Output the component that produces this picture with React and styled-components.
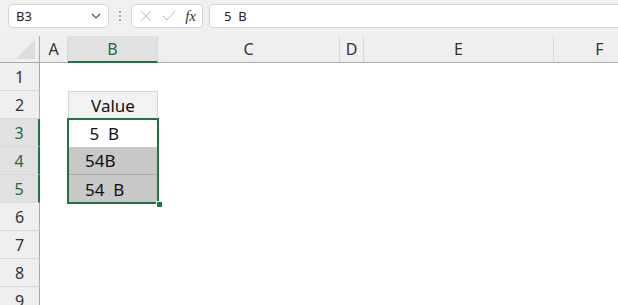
import React from "react";
import styled, { createGlobalStyle } from "styled-components";

const Global = createGlobalStyle`
  html, body { margin: 0; padding: 0; background: #ffffff; }
  body { font-family: "Segoe UI", "Noto Sans", "Open Sans", sans-serif; overflow: hidden; }
`;

const Page = styled.div`
  width: 618px;
  height: 305px;
  display: flex;
  flex-direction: column;
  background: #fff;
  overflow: hidden;
`;

const Toolbar = styled.div`
  height: 36px;
  flex: none;
  background: #f0f0f0;
  display: flex;
  align-items: flex-start;
  padding: 4px 0 0 8px;
  box-sizing: border-box;
`;

const Box = styled.div`
  height: 24px;
  box-sizing: border-box;
  background: #fff;
  border: 1px solid #d5d5d5;
  border-radius: 4px;
  display: flex;
  align-items: center;
`;

const NameBox = styled(Box)`
  width: 101px;
  padding: 0 6px 0 7px;
  justify-content: space-between;
  font-size: 13px;
  color: #222;
`;

const Dots = styled.div`
  width: 22px;
  height: 24px;
  display: flex;
  flex-direction: column;
  align-items: center;
  justify-content: center;
  gap: 2px;
  span {
    width: 2px;
    height: 2px;
    background: #8a8a8a;
    border-radius: 1px;
  }
`;

const FxBox = styled(Box)`
  width: 72px;
  padding: 0 4px 0 8px;
  justify-content: space-between;
`;

const FormulaInput = styled(Box)`
  flex: 1;
  margin-left: 6px;
  border-right: none;
  border-radius: 4px 0 0 4px;
  padding-left: 14px;
  font-size: 13px;
  color: #222;
  white-space: pre;
`;

const Fx = styled.span`
  font-family: "Liberation Serif", "DejaVu Serif", serif;
  font-style: italic;
  font-size: 15px;
  color: #333;
  padding-right: 2px;
`;

const Sheet = styled.div`
  display: grid;
  grid-template-columns: 40px 28px 90px 182px 24px 190px 92px;
  grid-template-rows: 27px repeat(9, 28px);
  position: relative;
`;

const Corner = styled.div`
  background: #efefef;
  border-bottom: 1px solid #ababab;
  border-right: 1px solid #ababab;
  position: relative;
  &::after {
    content: "";
    position: absolute;
    right: 4px;
    bottom: 3px;
    width: 0;
    height: 0;
    border-left: 19px solid transparent;
    border-bottom: 19px solid #dcdcdc;
  }
`;

const ColHead = styled.div`
  background: ${(p) => (p.$sel ? "#e1e1e1" : "#efefef")};
  color: ${(p) => (p.$sel ? "#1d6b3f" : "#333")};
  border-bottom: ${(p) => (p.$sel ? "2px solid #217346" : "1px solid #ababab")};
  border-right: 1px solid #d8d8d8;
  font-size: 16px;
  display: flex;
  align-items: center;
  justify-content: center;
  box-sizing: border-box;
  padding-top: ${(p) => (p.$sel ? "1px" : "0")};
`;

const RowHead = styled.div`
  background: ${(p) => (p.$sel ? "#e1e1e1" : "#efefef")};
  color: ${(p) => (p.$sel ? "#1d6b3f" : "#333")};
  border-right: ${(p) => (p.$sel ? "2px solid #217346" : "1px solid #ababab")};
  border-bottom: 1px solid #d8d8d8;
  font-size: 16px;
  display: flex;
  align-items: center;
  justify-content: center;
  box-sizing: border-box;
`;

const Cell = styled.div`
  background: ${(p) => p.$bg || "#fff"};
  border: ${(p) => (p.$boxed ? "1px solid #d4d4d4" : "none")};
  border-bottom: ${(p) => (p.$line ? "1px solid #ababab" : p.$boxed ? "1px solid #d4d4d4" : "none")};
  font-size: 17px;
  color: #111;
  display: flex;
  align-items: center;
  justify-content: ${(p) => (p.$center ? "center" : "flex-start")};
  padding-left: ${(p) => p.$pad || 0}px;
  white-space: pre;
  box-sizing: border-box;
`;

const Selection = styled.div`
  grid-column: 3 / 4;
  grid-row: 4 / 7;
  position: absolute;
  inset: -1px;
  border: 2px solid #217346;
  pointer-events: none;
  &::after {
    content: "";
    position: absolute;
    right: -5px;
    bottom: -5px;
    width: 5px;
    height: 5px;
    background: #217346;
    border-left: 1px solid #fff;
    border-top: 1px solid #fff;
  }
`;

const Chevron = () => (
  <svg width="12" height="12" viewBox="0 0 12 12">
    <path d="M2 4 L6 8 L10 4" fill="none" stroke="#555" strokeWidth="1.2" />
  </svg>
);

const XIcon = () => (
  <svg width="12" height="12" viewBox="0 0 12 12">
    <path d="M1 1 L11 11 M11 1 L1 11" stroke="#b8b8b8" strokeWidth="1" fill="none" />
  </svg>
);

const CheckIcon = () => (
  <svg width="14" height="12" viewBox="0 0 14 12">
    <path d="M1 6 L5 10 L13 1" stroke="#b8b8b8" strokeWidth="1" fill="none" />
  </svg>
);

const cols = ["A", "B", "C", "D", "E", "F"];

export default function App() {
  const rows = [1, 2, 3, 4, 5, 6, 7, 8, 9];
  const cellFor = (r, c) => {
    if (c !== "B") return null;
    if (r === 2) return { text: "Value", boxed: true, bg: "#f2f2f2", center: true };
    if (r === 3) return { text: " 5  B", pad: 17 };
    if (r === 4) return { text: "54B", bg: "#c8c8c8", pad: 17, line: true };
    if (r === 5) return { text: "54  B", bg: "#c8c8c8", pad: 17 };
    return null;
  };
  return (
    <Page>
      <Global />
      <Toolbar>
        <NameBox>
          <span>B3</span>
          <Chevron />
        </NameBox>
        <Dots>
          <span />
          <span />
          <span />
        </Dots>
        <FxBox>
          <XIcon />
          <CheckIcon />
          <Fx>fx</Fx>
        </FxBox>
        <FormulaInput>5  B</FormulaInput>
      </Toolbar>
      <Sheet>
        <Corner />
        {cols.map((c) => (
          <ColHead key={c} $sel={c === "B"}>{c}</ColHead>
        ))}
        {rows.map((r) => (
          <React.Fragment key={r}>
            <RowHead $sel={r >= 3 && r <= 5}>{r}</RowHead>
            {cols.map((c) => {
              const d = cellFor(r, c);
              return (
                <Cell
                  key={c}
                  $bg={d?.bg}
                  $boxed={d?.boxed}
                  $line={d?.line}
                  $center={d?.center}
                  $pad={d?.pad}
                >
                  {d?.text}
                </Cell>
              );
            })}
          </React.Fragment>
        ))}
        <Selection />
      </Sheet>
    </Page>
  );
}
